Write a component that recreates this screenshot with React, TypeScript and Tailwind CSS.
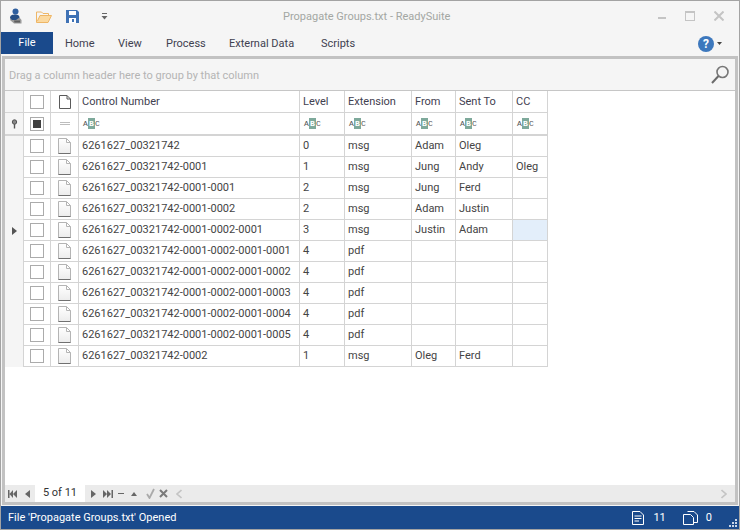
const rows = [
  ["6261627_00321742", "0", "msg", "Adam", "Oleg", ""],
  ["6261627_00321742-0001", "1", "msg", "Jung", "Andy", "Oleg"],
  ["6261627_00321742-0001-0001", "2", "msg", "Jung", "Ferd", ""],
  ["6261627_00321742-0001-0002", "2", "msg", "Adam", "Justin", ""],
  ["6261627_00321742-0001-0002-0001", "3", "msg", "Justin", "Adam", ""],
  ["6261627_00321742-0001-0002-0001-0001", "4", "pdf", "", "", ""],
  ["6261627_00321742-0001-0002-0001-0002", "4", "pdf", "", "", ""],
  ["6261627_00321742-0001-0002-0001-0003", "4", "pdf", "", "", ""],
  ["6261627_00321742-0001-0002-0001-0004", "4", "pdf", "", "", ""],
  ["6261627_00321742-0001-0002-0001-0005", "4", "pdf", "", "", ""],
  ["6261627_00321742-0002", "1", "msg", "Oleg", "Ferd", ""],
];

const grid = "grid grid-cols-[19px_27px_28px_221px_45px_67px_44px_57px_35px] w-[543px]";
const cell = "border-r border-b border-[#d4d4d4] flex items-center";

function Box({ checked }: { checked?: boolean }) {
  return (
    <div className="w-[14px] h-[14px] border border-[#ababab] bg-white flex items-center justify-center">
      {checked && <div className="w-[8px] h-[8px] bg-[#404040]" />}
    </div>
  );
}

function PageIcon() {
  return (
    <svg width="13" height="16" viewBox="0 0 13 16">
      <defs>
        <linearGradient id="pg" x1="0" y1="0" x2="0" y2="1">
          <stop offset="0" stopColor="#ffffff" />
          <stop offset="1" stopColor="#ececec" />
        </linearGradient>
      </defs>
      <path d="M0.5 0.5H8.5L12.5 4.5V15.5H0.5Z M8.5 0.5V4.5H12.5" fill="url(#pg)" stroke="#b4b4b4" />
      <path d="M0.5 15.5H12.5" stroke="#707070" />
    </svg>
  );
}

function HeaderPageIcon() {
  return (
    <svg width="12" height="14" viewBox="0 0 12 14">
      <path d="M0.5 0.5H8L11.5 4V13.5H0.5Z M8 0.5V4H11.5" fill="#fff" stroke="#5a5a5a" />
    </svg>
  );
}

function AbcIcon() {
  return (
    <div className="flex items-center h-[11px] font-['Liberation_Mono',monospace] text-[8px] leading-none text-[#555]">
      <span className="w-[5px] text-center">A</span>
      <span className="w-[7px] h-[11px] bg-[#7ea99b] text-white flex items-center justify-center font-bold">B</span>
      <span className="w-[5px] text-center">C</span>
    </div>
  );
}

function Header() {
  const labels = ["Level", "Extension", "From", "Sent To", "CC"];
  return (
    <div className={`${grid} h-[22px] text-[#3f4150]`}>
      <div className={`${cell} bg-[#f5f5f5]`} />
      <div className={`${cell} justify-center`}><Box /></div>
      <div className={`${cell} justify-center`}><HeaderPageIcon /></div>
      <div className={`${cell} pl-[3px] pt-[2px]`}>Control Number</div>
      {labels.map((l) => (
        <div key={l} className={`${cell} pl-[3px] pt-[2px]`}>{l}</div>
      ))}
    </div>
  );
}

function FilterRow() {
  return (
    <div className={`${grid} h-[23px] border-b-2 border-[#d4d4d4]`}>
      <div className={`${cell} border-b-0 bg-[#f5f5f5] justify-center`}>
        <svg width="7" height="10" viewBox="0 0 7 10">
          <circle cx="3.5" cy="3" r="2.2" fill="#888" stroke="#555" />
          <path d="M3.5 5V9.5" stroke="#555" strokeWidth="1.4" />
        </svg>
      </div>
      <div className={`${cell} border-b-0 justify-center`}><Box checked /></div>
      <div className={`${cell} border-b-0 justify-center`}>
        <div className="w-[10px] h-[3px] border-y border-[#bdbdbd]" />
      </div>
      {[0, 1, 2, 3, 4, 5].map((i) => (
        <div key={i} className={`${cell} border-b-0 pl-[4px]`}><AbcIcon /></div>
      ))}
    </div>
  );
}

function Row({ row, index }: { row: string[]; index: number }) {
  const current = index === 4;
  return (
    <div className={`${grid} h-[21px]`}>
      <div className={`${cell} border-b-0 bg-[#f5f5f5] justify-center`}>
        {current && (
          <svg width="5" height="8" viewBox="0 0 5 8"><path d="M0 0L5 4L0 8Z" fill="#555" /></svg>
        )}
      </div>
      <div className={`${cell} justify-center`}><Box /></div>
      <div className={`${cell} justify-center`}><PageIcon /></div>
      {row.map((v, i) => (
        <div
          key={i}
          className={`${cell} pl-[3px] pt-[1px] whitespace-nowrap ${current && i === 5 ? "bg-[#e3eefa]" : ""}`}
        >
          {v}
        </div>
      ))}
    </div>
  );
}

export default function App() {
  return (
    <div className="w-[740px] h-[530px] bg-[#f5f5f5] border border-[#a3a3a3] flex flex-col font-['Roboto',sans-serif] text-[11px] text-[#444] overflow-hidden">
      {/* title bar */}
      <div className="h-[30px] flex items-center shrink-0 relative">
        <div className="flex items-center pl-[8px]">
          <svg width="13" height="16" viewBox="0 0 13 16">
            <path d="M2 9H10L12.5 12V15.5H5L1 12Z" fill="#9a9a9a" />
            <path d="M5 12.5H11V14.5H5.5Z" fill="#5f5f5f" />
            <circle cx="6.5" cy="3.5" r="3" fill="#2f5f9f" />
            <path d="M1 10C1 7 3.5 6.5 6.5 6.5C9 6.5 10.5 7.5 10.5 9.5L7 12H3Z" fill="#274f85" />
          </svg>
          <svg width="16" height="13" viewBox="0 0 16 13" className="ml-[14px]">
            <path d="M0.5 2V12.5H12L15.5 5.5H4L1.5 11" fill="#fbd9a0" stroke="#eeb666" />
            <path d="M0.5 2H5.5L7 3.5H12.5V5.5" fill="none" stroke="#eeb666" />
          </svg>
          <svg width="13" height="13" viewBox="0 0 13 13" className="ml-[14px]">
            <path d="M0 0H11L13 2V13H0Z" fill="#3f72b5" />
            <rect x="3" y="1" width="7" height="4" fill="#fff" />
            <rect x="3" y="8" width="7" height="5" fill="#fff" />
            <rect x="6" y="9" width="2" height="3" fill="#3f72b5" />
          </svg>
          <svg width="7" height="7" viewBox="0 0 7 7" className="ml-[22px]">
            <path d="M1 0.5H6" stroke="#666" />
            <path d="M0.5 3H6.5L3.5 6.5Z" fill="#666" />
          </svg>
        </div>
        <div className="absolute left-[282px] top-[8px] text-[#a3a7a3]">Propagate Groups.txt - ReadySuite</div>
        <div className="ml-auto flex items-center gap-[19px] pr-[15px]">
          <div className="w-[8px] h-[2px] bg-[#c4c4c4] mt-[3px]" />
          <div className="w-[10px] h-[10px] border border-t-[2px] border-[#c4c4c4]" />
          <svg width="10" height="10" viewBox="0 0 10 10">
            <path d="M0.5 0.5L9.5 9.5M9.5 0.5L0.5 9.5" stroke="#c4c4c4" strokeWidth="2" />
          </svg>
        </div>
      </div>
      {/* ribbon tabs */}
      <div className="h-[25px] flex items-center shrink-0">
        <div className="w-[52px] h-[22px] self-end mb-[2px] bg-[#1a4a8c] text-white flex items-center justify-center">File</div>
        <div className="flex items-center pl-[12px] pt-[2px] text-[#3f4150]">
          <span className="w-[53px]">Home</span>
          <span className="w-[48px]">View</span>
          <span className="w-[63px]">Process</span>
          <span className="w-[92px]">External Data</span>
          <span>Scripts</span>
        </div>
        <div className="ml-auto flex items-center pr-[17px] gap-[3px]">
          <div className="w-[16px] h-[16px] rounded-full bg-[#3d78bd] text-white font-bold text-[12px] flex items-center justify-center">?</div>
          <svg width="5" height="3" viewBox="0 0 5 3"><path d="M0 0H5L2.5 3Z" fill="#444" /></svg>
        </div>
      </div>
      {/* document frame */}
      <div className="flex-1 min-h-0 flex flex-col bg-white border-[3px] border-[#c2c2c2] mx-[1px] mb-[1px]">
        <div className="h-[32px] shrink-0 bg-[#f5f5f5] border-b border-[#c6c6c6] flex items-center pl-[4px] pr-[5px] text-[#b4b4b4]">
          <span className="pt-[4px]">Drag a column header here to group by that column</span>
          <svg width="20" height="20" viewBox="0 0 20 20" className="ml-auto">
            <circle cx="12.5" cy="7" r="5.5" fill="none" stroke="#777" strokeWidth="1.6" />
            <path d="M8.5 11L2 18" stroke="#6b6b6b" strokeWidth="2" />
          </svg>
        </div>
        <div className="flex-1 min-h-0">
          <Header />
          <FilterRow />
          {rows.map((r, i) => (
            <Row key={r[0]} row={r} index={i} />
          ))}
        </div>
        {/* navigator */}
        <div className="h-[17px] shrink-0 bg-[#ebebeb] flex items-center pl-[3px] pr-[8px]">
          <svg width="9" height="8" viewBox="0 0 9 8"><path d="M0 0H1.5V8H0ZM5 0V8L1.5 4ZM9 0V8L5 4Z" fill="#666" /></svg>
          <svg width="5" height="8" viewBox="0 0 5 8" className="ml-[8px]"><path d="M5 0V8L0 4Z" fill="#666" /></svg>
          <div className="w-[50px] h-[17px] bg-white flex items-center justify-center ml-[5px] text-[#333]">5 of 11</div>
          <svg width="5" height="8" viewBox="0 0 5 8" className="ml-[6px]"><path d="M0 0V8L5 4Z" fill="#666" /></svg>
          <svg width="10" height="8" viewBox="0 0 10 8" className="ml-[7px]"><path d="M0 0V8L4 4ZM4 0V8L8 4ZM8.5 0H10V8H8.5Z" fill="#666" /></svg>
          <div className="w-[6px] h-[1px] bg-[#666] ml-[5px]" />
          <svg width="6" height="4" viewBox="0 0 6 4" className="ml-[7px]"><path d="M0 4L3 0L6 4Z" fill="#666" /></svg>
          <svg width="9" height="11" viewBox="0 0 9 11" className="ml-[9px]"><path d="M1 6L3.5 10L8 1" fill="none" stroke="#aaa" strokeWidth="1.8" /></svg>
          <svg width="9" height="9" viewBox="0 0 9 9" className="ml-[4px]"><path d="M1 1L8 8M8 1L1 8" stroke="#7a7a7a" strokeWidth="2" /></svg>
          <svg width="6" height="10" viewBox="0 0 6 10" className="ml-[8px]"><path d="M5.5 1L1 5L5.5 9" fill="none" stroke="#c4c4c4" strokeWidth="1.6" /></svg>
          <svg width="6" height="10" viewBox="0 0 6 10" className="ml-auto"><path d="M0.5 1L5 5L0.5 9" fill="none" stroke="#c4c4c4" strokeWidth="1.6" /></svg>
        </div>
      </div>
      {/* status bar */}
      <div className="h-[23px] shrink-0 bg-[#1a4a8c] text-white flex items-center pl-[7px] pr-[27px] relative">
        <span className="pt-[1px]">File 'Propagate Groups.txt' Opened</span>
        <svg width="12" height="14" viewBox="0 0 12 14" className="ml-auto">
          <path d="M0.5 0.5H8L11.5 4V13.5H0.5Z" fill="none" stroke="#fff" />
          <path d="M2.5 5H9.5M2.5 7.5H9.5M2.5 10H7" stroke="#fff" />
        </svg>
        <span className="ml-[9px] pt-[1px]">11</span>
        <svg width="15" height="14" viewBox="0 0 15 14" className="ml-[17px]">
          <path d="M4.5 0.5H11L14.5 4V11.5H11" fill="none" stroke="#fff" />
          <path d="M0.5 3.5H7.5L10.5 6.5V13.5H0.5Z" fill="#1a4a8c" stroke="#fff" />
        </svg>
        <span className="ml-[8px] pt-[1px]">0</span>
        <svg width="9" height="9" viewBox="0 0 9 9" className="absolute right-[1px] bottom-[1px]">
          <path d="M6 0H8V2H6ZM3 3H5V5H3ZM6 3H8V5H6ZM0 6H2V8H0ZM3 6H5V8H3ZM6 6H8V8H6Z" fill="#c9d6e8" />
        </svg>
      </div>
    </div>
  );
}
